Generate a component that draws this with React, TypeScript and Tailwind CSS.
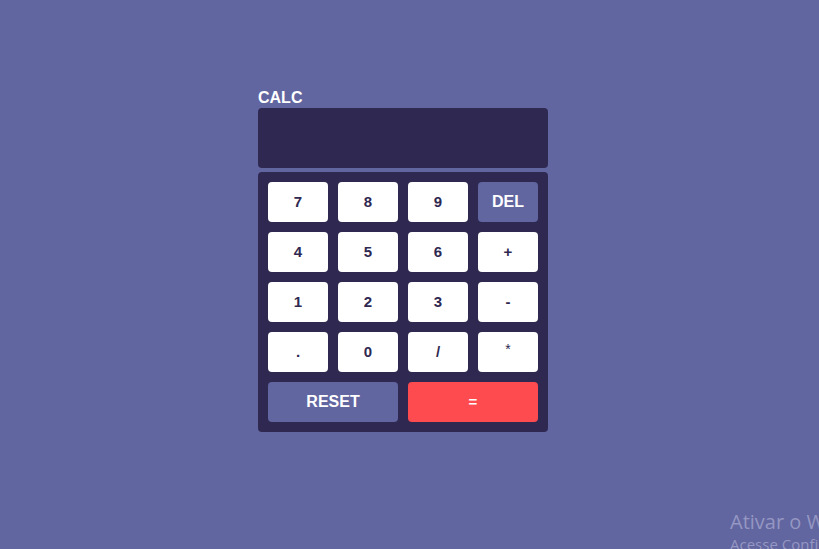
const keys = [
  { label: "7" }, { label: "8" }, { label: "9" }, { label: "DEL", dark: true },
  { label: "4" }, { label: "5" }, { label: "6" }, { label: "+" },
  { label: "1" }, { label: "2" }, { label: "3" }, { label: "-" },
  { label: "." }, { label: "0" }, { label: "/" }, { label: "*" },
];

export default function App() {
  return (
    <div className="relative w-[819px] h-[549px] overflow-hidden bg-[#6165a0] font-['Liberation_Sans',Arial,sans-serif]">
      <div className="pl-[258px] pt-[88px]">
        <div className="w-[290px]">
          <h1 className="text-white font-bold text-[16px] leading-[19px] mb-[1px]">CALC</h1>
          {/* display */}
          <div className="h-[60px] bg-[#2f2851] rounded-[4px]"></div>
          {/* keypad */}
          <div className="mt-[4px] bg-[#2f2851] rounded-[4px] p-[10px] grid grid-cols-4 gap-[10px]">
            {keys.map((k) => (
              <button
                key={k.label}
                className={
                  k.dark
                    ? "h-[40px] rounded-[4px] bg-[#6165a0] text-white font-bold text-[16px]"
                    : k.label === "*"
                    ? "h-[40px] rounded-[4px] bg-white text-[#2f2851] text-[14px] pb-[6px]"
                    : "h-[40px] rounded-[4px] bg-white text-[#2f2851] font-bold text-[15px]"
                }
              >
                {k.label}
              </button>
            ))}
            <button className="col-span-2 h-[40px] rounded-[4px] bg-[#6165a0] text-white font-bold text-[16px]">
              RESET
            </button>
            <button className="col-span-2 h-[40px] rounded-[4px] bg-[#fe4b50] text-white font-bold text-[15px]">
              =
            </button>
          </div>
        </div>
      </div>
      {/* windows activation watermark */}
      <div className="absolute left-[730px] top-[509px] whitespace-nowrap text-[#9597c2] font-['Open_Sans',sans-serif]">
        <div className="text-[20px] leading-[25px]">Ativar o Windows</div>
        <div className="text-[15px] leading-[20px]">Acesse Configurações para ativar o Windows.</div>
      </div>
    </div>
  );
}
